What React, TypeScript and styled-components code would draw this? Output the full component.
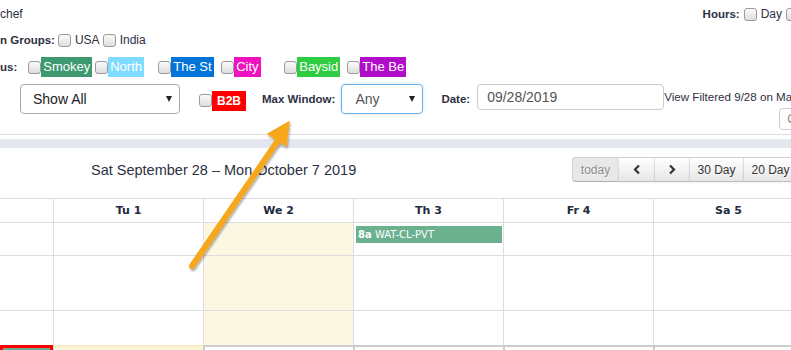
import React, { FC } from "react";
import styled, { createGlobalStyle } from "styled-components";

const TEXT = "#2d3142";

interface Location {
  name: string;
  color: string;
}

const locations: Location[] = [
  { name: "Smokey", color: "#3d9970" },
  { name: "North", color: "#7fdbff" },
  { name: "The St", color: "#0074d9" },
  { name: "City", color: "#f012be" },
  { name: "Baysid", color: "#2ecc40" },
  { name: "The Be", color: "#b10dc9" },
];

const days = ["Tu 1", "We 2", "Th 3", "Fr 4", "Sa 5"];
const TODAY = 1;

const rows = [33, 55, 34];

const App: FC = () => {
  const renderCheckOption = (label: string) => (
    <Option key={label}>
      <Checkbox />
      <OptionText>{label}</OptionText>
    </Option>
  );

  const renderToolbar = () => (
    <CalToolbar>
      <CalTitle>Sat September 28 – Mon October 7 2019</CalTitle>
      <ButtonGroup>
        <CalButton $w={46} $first $disabled>
          today
        </CalButton>
        <CalButton $w={36}>
          <svg width="8" height="11" viewBox="0 0 8 11">
            <path d="M6 1.5 L2 5.5 L6 9.5" fill="none" stroke="#333" strokeWidth="2.2" />
          </svg>
        </CalButton>
        <CalButton $w={35}>
          <svg width="8" height="11" viewBox="0 0 8 11">
            <path d="M2 1.5 L6 5.5 L2 9.5" fill="none" stroke="#333" strokeWidth="2.2" />
          </svg>
        </CalButton>
        <CalButton $w={54}>30 Day</CalButton>
        <CalButton $w={54}>20 Day</CalButton>
        <CalButton $w={54}>10 Day</CalButton>
      </ButtonGroup>
    </CalToolbar>
  );

  const renderGrid = () => (
    <Grid>
      <HeadCell $first />
      {days.map((d) => (
        <HeadCell key={d}>{d}</HeadCell>
      ))}
      {rows.map((h, r) => (
        <React.Fragment key={r}>
          <BodyCell $h={h} $first $last={r === rows.length - 1} />
          {days.map((d, i) => (
            <BodyCell key={d} $h={h} $today={i === TODAY} $last={r === rows.length - 1}>
              {r === 0 && i === 2 && (
                <EventBar>
                  <b>8a</b> WAT-CL-PVT
                </EventBar>
              )}
            </BodyCell>
          ))}
        </React.Fragment>
      ))}
      <NextCell $kind="selected" />
      <NextCell $kind="soft" />
      {days.slice(1).map((d) => (
        <NextCell key={d} $kind="plain" />
      ))}
    </Grid>
  );

  return (
    <Page>
      <GlobalStyle />
      <FilterRow $top={4}>
        <OptionText>chef</OptionText>
        <HoursGroup>
          <Label>Hours:</Label>
          {renderCheckOption("Day")}
          {renderCheckOption("Night")}
        </HoursGroup>
      </FilterRow>

      <FilterRow $top={6}>
        <Label>n Groups:</Label>
        {renderCheckOption("USA")}
        {renderCheckOption("India")}
      </FilterRow>

      <FilterRow $top={7}>
        <Label>us:</Label>
        <LocationList>
          {locations.map((loc) => (
            <LocationItem key={loc.name}>
              <Checkbox />
              <Badge $bg={loc.color}>{loc.name}</Badge>
            </LocationItem>
          ))}
        </LocationList>
      </FilterRow>

      <ControlsRow>
        <SelectBox $w={160}>
          <span>Show All</span>
          <Caret />
        </SelectBox>
        <B2BGroup>
          <Checkbox />
          <Badge $bg="#ff0000" $bold>
            B2B
          </Badge>
        </B2BGroup>
        <Label $gap={16}>Max Window:</Label>
        <SelectBox $w={82} $focused $gapLeft={6}>
          <span>Any</span>
          <Caret />
        </SelectBox>
        <Label $gap={18}>Date:</Label>
        <DateInput>09/28/2019</DateInput>
        <ViewColumn>
          <ViewLink>View Filtered 9/28 on Map</ViewLink>
          <ClearButton>Clear</ClearButton>
        </ViewColumn>
      </ControlsRow>

      <Divider />
      <Band />

      {renderToolbar()}
      {renderGrid()}

      <ArrowOverlay width={791} height={350} viewBox="0 0 791 350">
        <defs>
          <filter id="arrowShadow" x="-20%" y="-20%" width="140%" height="140%">
            <feDropShadow dx="1" dy="2" stdDeviation="1.2" floodColor="#000" floodOpacity="0.35" />
          </filter>
        </defs>
        <g filter="url(#arrowShadow)" fill="#f7a71d" stroke="#f7a71d">
          <line x1={192} y1={266} x2={279} y2={139} strokeWidth={6} strokeLinecap="round" />
          <polygon points="289,122 268,134 286,146" strokeWidth={1.5} strokeLinejoin="round" />
        </g>
      </ArrowOverlay>
    </Page>
  );
};

const GlobalStyle = createGlobalStyle`
  *, *::before, *::after { box-sizing: border-box; }
  html, body { margin: 0; padding: 0; background: #fff; }
  body {
    font-family: "Liberation Sans", Arial, sans-serif;
    font-size: 12px;
    color: ${TEXT};
    overflow: hidden;
  }
`;

const Page = styled.div`
  position: relative;
  width: 791px;
  height: 350px;
  overflow: hidden;
`;

const FilterRow = styled.div<{ $top: number }>`
  display: flex;
  align-items: center;
  height: 20px;
  margin-top: ${(p) => p.$top}px;
  white-space: nowrap;
`;

const Label = styled.span<{ $gap?: number }>`
  font-weight: bold;
  font-size: 11.5px;
  margin-left: ${(p) => p.$gap ?? 0}px;
  flex-shrink: 0;
`;

const OptionText = styled.span`
  font-size: 12px;
`;

const Option = styled.span`
  display: inline-flex;
  align-items: center;
  gap: 4px;
  margin-left: 3px;
  flex-shrink: 0;
`;

const Checkbox = styled.span`
  display: inline-block;
  width: 13px;
  height: 13px;
  flex-shrink: 0;
  border: 1px solid #9a9a9a;
  border-radius: 3px;
  background: linear-gradient(#fbfbfb, #dedede);
`;

const HoursGroup = styled.div`
  display: flex;
  align-items: center;
  margin-left: auto;
  margin-right: -40px;
  ${Option} {
    margin-left: 4px;
  }
`;

const LocationList = styled.div`
  display: flex;
  align-items: center;
  margin-left: 11px;
`;

const LocationItem = styled.div`
  display: flex;
  align-items: center;
  min-width: 60px;
  margin-right: 3px;
`;

const Badge = styled.span<{ $bg: string; $bold?: boolean }>`
  display: inline-block;
  height: 20px;
  line-height: 20px;
  padding: 0 ${(p) => (p.$bold ? 5 : 2)}px;
  background: ${(p) => p.$bg};
  color: #fff;
  font-size: ${(p) => (p.$bold ? 12 : 13)}px;
  font-weight: ${(p) => (p.$bold ? "bold" : "normal")};
  white-space: nowrap;
`;

const ControlsRow = styled.div`
  display: flex;
  align-items: center;
  height: 30px;
  margin-top: 7px;
  padding-left: 20px;
  white-space: nowrap;
`;

const SelectBox = styled.div<{ $w: number; $focused?: boolean; $gapLeft?: number }>`
  display: flex;
  align-items: center;
  justify-content: space-between;
  flex-shrink: 0;
  width: ${(p) => p.$w}px;
  height: 30px;
  margin-left: ${(p) => p.$gapLeft ?? 0}px;
  padding: 0 6px 0 ${(p) => (p.$focused ? 13 : 12)}px;
  border: 1px solid ${(p) => (p.$focused ? "#66afe9" : "#a9a9a9")};
  border-radius: 4px;
  box-shadow: ${(p) => (p.$focused ? "0 0 3px rgba(102,175,233,.35)" : "none")};
  font-size: 14px;
  color: ${(p) => (p.$focused ? "#555" : "#222")};
`;

const Caret = styled.span`
  width: 0;
  height: 0;
  border-left: 3px solid transparent;
  border-right: 3px solid transparent;
  border-top: 6px solid #222;
  margin-right: 1px;
`;

const B2BGroup = styled.div`
  display: flex;
  align-items: center;
  margin-left: 19px;
  margin-top: 3px;
  ${Badge} {
    margin-top: 1px;
  }
`;

const DateInput = styled.div`
  align-self: flex-start;
  flex-shrink: 0;
  width: 187px;
  height: 26px;
  line-height: 24px;
  margin-left: 7px;
  padding-left: 9px;
  border: 1px solid #ccc;
  border-radius: 4px;
  font-size: 14px;
  color: #555;
`;

const ViewColumn = styled.div`
  align-self: flex-start;
  display: flex;
  flex-direction: column;
  margin-left: 0px;
  padding-top: 6px;
`;

const ViewLink = styled.span`
  font-size: 11.6px;
  line-height: 14px;
`;

const ClearButton = styled.div`
  width: 50px;
  height: 22px;
  line-height: 20px;
  margin: 4px 0 0 115px;
  padding-left: 7px;
  border: 1px solid #ccc;
  border-radius: 4px;
  font-size: 12px;
  color: #888;
`;

const Divider = styled.div`
  height: 1px;
  margin-top: 20px;
  background: #ddd;
`;

const Band = styled.div`
  height: 9px;
  margin-top: 4px;
  background: #e4e8ee;
`;

const CalToolbar = styled.div`
  display: flex;
  align-items: center;
  height: 25px;
  margin-top: 9px;
  white-space: nowrap;
`;

const CalTitle = styled.div`
  flex: 0 0 572px;
  padding-left: 91px;
  font-size: 14.5px;
`;

const ButtonGroup = styled.div`
  display: flex;
  flex-shrink: 0;
`;

const CalButton = styled.div<{ $w: number; $first?: boolean; $disabled?: boolean }>`
  display: flex;
  align-items: center;
  justify-content: center;
  width: ${(p) => p.$w}px;
  height: 25px;
  border: 1px solid;
  border-color: rgba(0, 0, 0, 0.1) rgba(0, 0, 0, 0.1) rgba(0, 0, 0, 0.25);
  border-right: none;
  border-radius: ${(p) => (p.$first ? "4px 0 0 4px" : "0")};
  background: ${(p) => (p.$disabled ? "#e8e8e8" : "linear-gradient(#ffffff, #e6e6e6)")};
  box-shadow: ${(p) => (p.$disabled ? "none" : "inset 0 1px 0 rgba(255,255,255,.2), 0 1px 2px rgba(0,0,0,.05)")};
  color: ${(p) => (p.$disabled ? "#8c8c8c" : "#333")};
  text-shadow: 0 1px 1px rgba(255, 255, 255, 0.75);
  font-size: 12px;
`;

const Grid = styled.div`
  display: grid;
  grid-template-columns: 53px repeat(5, 150px);
  width: 803px;
  margin-top: 16px;
`;

const HeadCell = styled.div<{ $first?: boolean }>`
  height: 25px;
  line-height: 23px;
  border-top: 1px solid #ddd;
  border-bottom: 1px solid #ddd;
  border-left: ${(p) => (p.$first ? "none" : "1px solid #ddd")};
  text-align: center;
  font-family: "DejaVu Sans", Verdana, sans-serif;
  font-size: 11px;
  font-weight: bold;
  color: #232a3d;
`;

const BodyCell = styled.div<{ $h: number; $first?: boolean; $today?: boolean; $last?: boolean }>`
  height: ${(p) => p.$h}px;
  border-left: ${(p) => (p.$first ? "none" : "1px solid #ddd")};
  border-bottom: ${(p) => (p.$last ? "none" : "1px solid #ddd")};
  background: ${(p) => (p.$today ? "#fcf7e3" : "#fff")};
  padding: 3px 1px 0 2px;
`;

const EventBar = styled.div`
  height: 17px;
  line-height: 17px;
  padding-left: 2px;
  background: #6bb08f;
  color: #fff;
  font-family: "DejaVu Sans", Verdana, sans-serif;
  font-size: 10px;
  white-space: nowrap;
  overflow: hidden;
`;

const NextCell = styled.div<{ $kind: "selected" | "soft" | "plain" }>`
  height: 30px;
  ${(p) =>
    p.$kind === "selected"
      ? "border: 3px solid #ff0000; background: #6bb08f;"
      : p.$kind === "soft"
      ? "border-left: 1px solid #ddd; border-top: 2px solid #f5ebc4; background: #fcf4d8;"
      : "border-left: 2px solid #ccc; border-top: 2px solid #ccc; background: #fff;"}
`;

const ArrowOverlay = styled.svg`
  position: absolute;
  left: 0;
  top: 0;
  pointer-events: none;
`;

export default App;
